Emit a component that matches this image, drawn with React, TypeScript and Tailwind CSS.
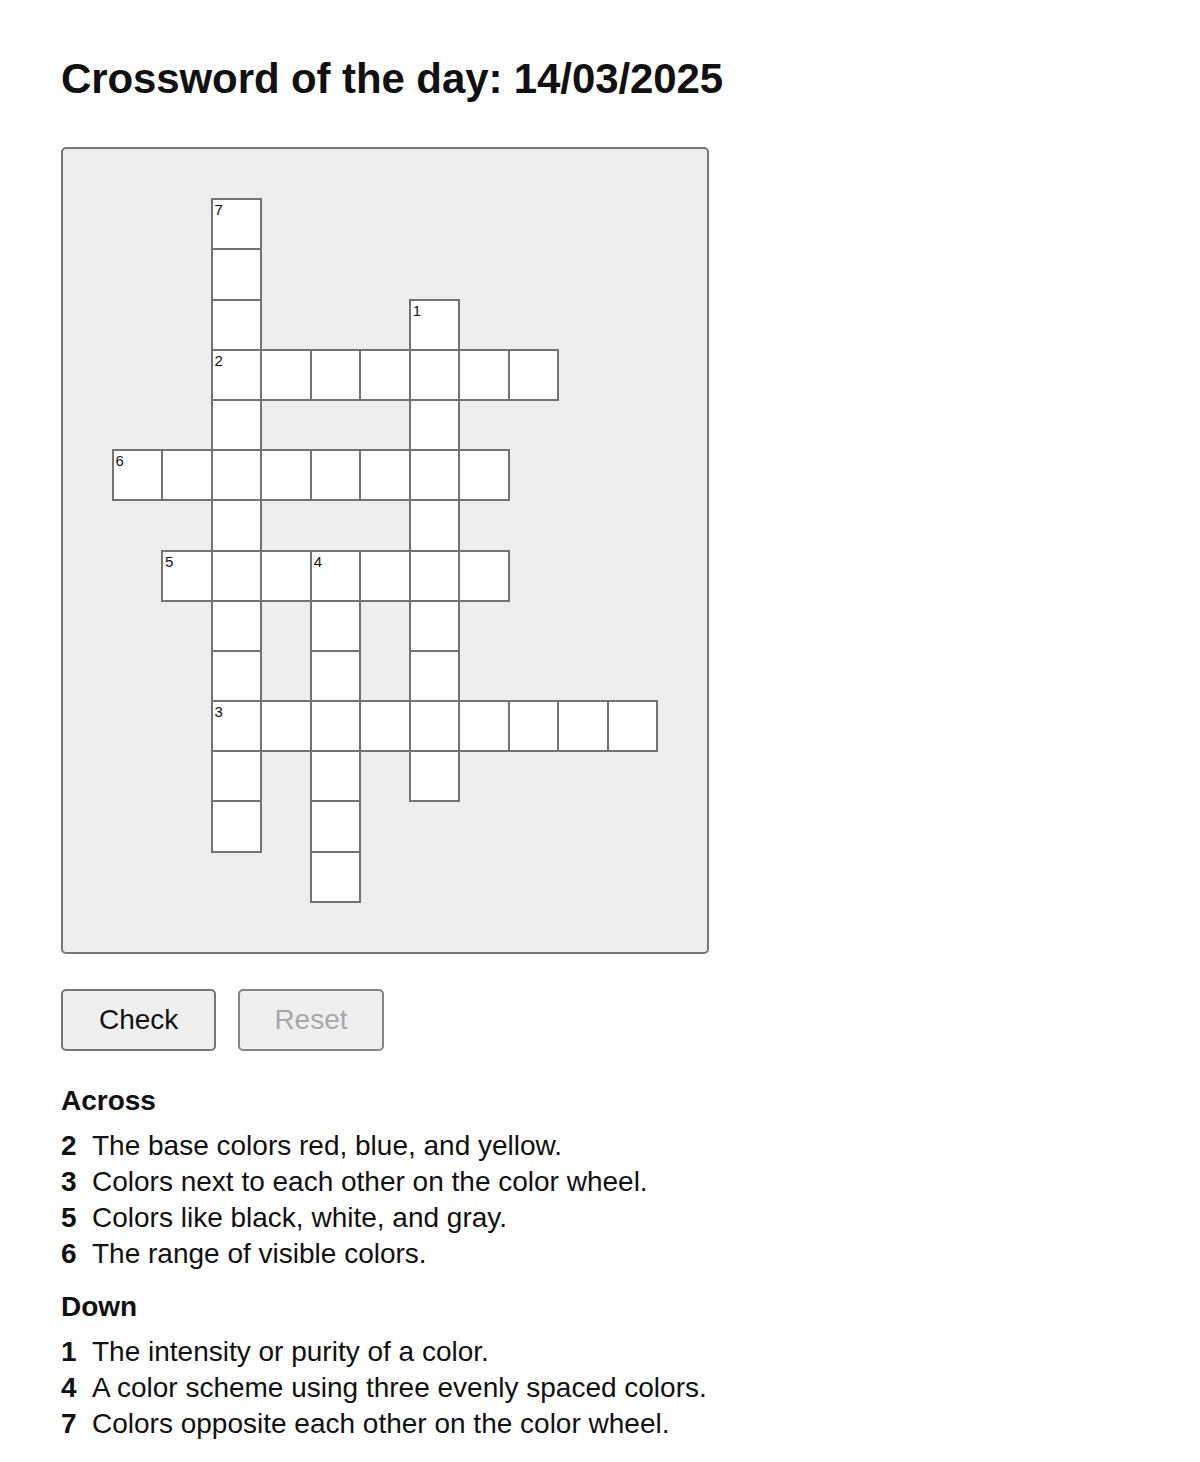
import React from "react";

type Word = { n: number; c: number; r: number; dir: "across" | "down"; len: number };

// Grid layout of the puzzle: column / row of the first letter and the word length.
const words: Word[] = [
  { n: 7, c: 2, r: 0, dir: "down", len: 13 },
  { n: 1, c: 6, r: 2, dir: "down", len: 10 },
  { n: 2, c: 2, r: 3, dir: "across", len: 7 },
  { n: 6, c: 0, r: 5, dir: "across", len: 8 },
  { n: 5, c: 1, r: 7, dir: "across", len: 7 },
  { n: 4, c: 4, r: 7, dir: "down", len: 7 },
  { n: 3, c: 2, r: 10, dir: "across", len: 9 },
];

const across = [
  { n: 2, text: "The base colors red, blue, and yellow." },
  { n: 3, text: "Colors next to each other on the color wheel." },
  { n: 5, text: "Colors like black, white, and gray." },
  { n: 6, text: "The range of visible colors." },
];

const down = [
  { n: 1, text: "The intensity or purity of a color." },
  { n: 4, text: "A color scheme using three evenly spaced colors." },
  { n: 7, text: "Colors opposite each other on the color wheel." },
];

function buildCells() {
  const map = new Map<string, { c: number; r: number; n?: number }>();
  for (const w of words) {
    for (let i = 0; i < w.len; i++) {
      const c = w.dir === "across" ? w.c + i : w.c;
      const r = w.dir === "down" ? w.r + i : w.r;
      const key = `${c},${r}`;
      const existing = map.get(key) ?? { c, r };
      if (i === 0) existing.n = w.n;
      map.set(key, existing);
    }
  }
  return Array.from(map.values());
}

function ClueList({ title, clues }: { title: string; clues: { n: number; text: string }[] }) {
  return (
    <div>
      <h2 className="text-[28px] font-bold leading-[36px]">{title}</h2>
      <ul className="mt-[9px]">
        {clues.map((cl) => (
          <li key={cl.n} className="text-[28px] leading-[36px] flex">
            <span className="w-[31px] font-bold shrink-0">{cl.n}</span>
            <span>{cl.text}</span>
          </li>
        ))}
      </ul>
    </div>
  );
}

export default function App() {
  const cells = buildCells();
  return (
    <div className="min-h-[1462px] bg-white text-[#111] font-['Liberation_Sans',Arial,sans-serif] pl-[61px] pt-[55px]">
      <h1 className="text-[42px] font-bold leading-[48px] tracking-[-0.1px]">Crossword of the day: 14/03/2025</h1>

      <div className="mt-[44px] w-[648px] h-[807px] border-2 border-[#777] rounded-[5px] bg-[#eeeeee] grid grid-cols-[repeat(13,minmax(0,1fr))] grid-rows-[repeat(16,minmax(0,1fr))]">
        {cells.map((cell) => (
          <div
            key={`${cell.c}-${cell.r}`}
            className="relative -m-px border-2 border-[#737373] bg-white"
            style={{ gridColumn: cell.c + 2, gridRow: cell.r + 2 }}
          >
            {cell.n !== undefined && (
              <span className="absolute left-[2px] top-[1px] text-[15px] leading-[17px] text-[#111]">
                {cell.n}
              </span>
            )}
          </div>
        ))}
      </div>

      <div className="mt-[35px] flex gap-[22px]">
        <button className="h-[62px] px-[36px] border-2 border-[#777] rounded-[5px] bg-[#efefef] text-[28px] text-[#111]">
          Check
        </button>
        <button
          disabled
          className="h-[62px] px-[34px] border-2 border-[#858585] rounded-[5px] bg-[#efefef] text-[28px] text-[#a8a8a8]"
        >
          Reset
        </button>
      </div>

      <div className="mt-[32px]">
        <ClueList title="Across" clues={across} />
      </div>
      <div className="mt-[17px]">
        <ClueList title="Down" clues={down} />
      </div>
    </div>
  );
}
